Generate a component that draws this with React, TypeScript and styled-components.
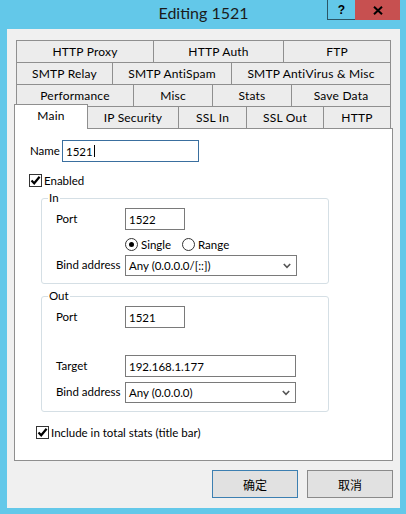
import React from "react";
import styled, { createGlobalStyle } from "styled-components";

const GlobalStyle = createGlobalStyle`
  html, body { margin: 0; padding: 0; }
  body {
    background: #63c8e9;
    font-family: Lato, "Noto Sans", "Noto Sans CJK SC", sans-serif;
    font-size: 11.5px;
    color: #000;
  }
  * { box-sizing: border-box; }
`;

const Window = styled.div`
  width: 406px;
  height: 514px;
  background: #63c8e9;
  display: flex;
  flex-direction: column;
  padding: 0 6px 6px 7px;
`;

const TitleBar = styled.div`
  height: 29px;
  flex: none;
  display: grid;
  grid-template-columns: 1fr auto 1fr;
  align-items: start;
`;

const Title = styled.div`
  grid-column: 2;
  font-size: 16px;
  line-height: 25px;
  color: #1b1b1b;
`;

const Controls = styled.div`
  grid-column: 3;
  justify-self: end;
  display: flex;
  height: 20px;
`;

const HelpButton = styled.div`
  width: 28px;
  height: 20px;
  border-left: 1px solid #2b5666;
  border-bottom: 1px solid #2b5666;
  display: flex;
  align-items: center;
  justify-content: center;
  font-family: "Liberation Sans", sans-serif;
  font-weight: bold;
  font-size: 12px;
`;

const CloseButton = styled.div`
  width: 45px;
  height: 20px;
  background: #c75050;
  display: flex;
  align-items: center;
  justify-content: center;
`;

const Client = styled.div`
  flex: 1;
  background: #f0f0f0;
  padding: 11px 7px 10px 7px;
  display: flex;
  flex-direction: column;
`;

const TabStrip = styled.div`
  margin: 0 2px;
  display: flex;
  flex-direction: column;
  font-size: 12px;
`;

const TabRow = styled.div`
  display: flex;
  align-items: flex-end;
  height: 23px;
  & + & { margin-top: -1px; }
`;

const Tab = styled.div<{ $w?: number; $active?: boolean }>`
  ${(p) => (p.$w ? `width: ${p.$w}px; flex: none;` : "flex: 1;")}
  height: ${(p) => (p.$active ? 25 : 23)}px;
  border: 1px solid #8f8f8f;
  ${(p) => (p.$active ? "border-bottom: none;" : "")}
  background: ${(p) => (p.$active ? "#ffffff" : "#ececec")};
  display: flex;
  align-items: center;
  justify-content: center;
  padding-bottom: ${(p) => (p.$active ? 3 : 0)}px;
  white-space: nowrap;
  letter-spacing: 0.2px;
  margin-left: ${(p) => (p.$active ? -2 : -1)}px;
  &:first-child { margin-left: ${(p) => (p.$active ? -2 : 0)}px; }
  position: relative;
  z-index: ${(p) => (p.$active ? 2 : 0)};
`;

const Panel = styled.div`
  margin-top: -1px;
  height: 333px;
  border: 1px solid #8f8f8f;
  background: #fff;
  display: flex;
  flex-direction: column;
  align-items: flex-start;
  position: relative;
  z-index: 1;
`;

const FieldRow = styled.div<{ $top: number; $left: number; $h?: number }>`
  display: flex;
  align-items: center;
  margin-top: ${(p) => p.$top}px;
  margin-left: ${(p) => p.$left}px;
  height: ${(p) => p.$h ?? 22}px;
  white-space: nowrap;
`;

const Label = styled.div<{ $w: number }>`
  width: ${(p) => p.$w}px;
  flex: none;
  margin-top: -2px;
`;

const TextBox = styled.div<{ $w: number; $focus?: boolean }>`
  width: ${(p) => p.$w}px;
  height: 22px;
  border: 1px solid ${(p) => (p.$focus ? "#3a6f9f" : "#7a7a7a")};
  background: #fff;
  padding-left: 3px;
  display: flex;
  align-items: center;
`;

const Caret = styled.span`
  display: inline-block;
  width: 1px;
  height: 12px;
  background: #000;
  margin-left: 1px;
`;

const Combo = styled.div<{ $w: number }>`
  width: ${(p) => p.$w}px;
  height: 21px;
  border: 1px solid #7a7a7a;
  background: #fff;
  padding: 0 5px 0 3px;
  display: flex;
  align-items: center;
  justify-content: space-between;
`;

const CheckBox = styled.div`
  width: 13px;
  height: 13px;
  border: 1px solid #333;
  background: #fff;
  display: flex;
  align-items: center;
  justify-content: center;
  flex: none;
`;

const CheckLabel = styled.span`
  margin-left: 2px;
`;

const Group = styled.div<{ $top: number; $h: number }>`
  position: relative;
  margin-top: ${(p) => p.$top}px;
  margin-left: 26px;
  width: 288px;
  height: ${(p) => p.$h}px;
  border: 1px solid #d5dfe5;
  border-radius: 3px;
  display: flex;
  flex-direction: column;
  align-items: flex-start;
`;

const Legend = styled.div`
  position: absolute;
  top: -9px;
  left: 6px;
  padding: 0 1px;
  background: #fff;
  line-height: 16px;
`;

const RadioOption = styled.div<{ $w?: number }>`
  display: flex;
  align-items: center;
  ${(p) => (p.$w ? `width: ${p.$w}px;` : "")}
`;

const RadioCircle = styled.div<{ $on?: boolean }>`
  width: 13px;
  height: 13px;
  border-radius: 50%;
  border: 1px solid #333;
  background: #fff;
  display: flex;
  align-items: center;
  justify-content: center;
  margin-right: 3px;
  &::after {
    content: "";
    width: 5px;
    height: 5px;
    border-radius: 50%;
    background: ${(p) => (p.$on ? "#000" : "transparent")};
  }
`;

const ButtonRow = styled.div`
  margin-top: 9px;
  display: flex;
  justify-content: flex-end;
  gap: 9px;
`;

const Button = styled.div<{ $default?: boolean }>`
  width: 86px;
  height: 28px;
  background: #e1e1e1;
  border: 1px solid ${(p) => (p.$default ? "#3c7fb1" : "#8a8a8a")};
  display: flex;
  align-items: center;
  justify-content: center;
  font-family: "Noto Sans CJK SC", sans-serif;
  font-size: 12px;
`;

const Check = () => (
  <svg width="11" height="11" viewBox="0 0 11 11">
    <path d="M1.5 5.5 L4.2 8.3 L9.6 1.8" fill="none" stroke="#000" strokeWidth="2.2" />
  </svg>
);

const Chevron = () => (
  <svg width="8" height="6" viewBox="0 0 8 6">
    <path d="M0.8 1 L4 4.3 L7.2 1" fill="none" stroke="#555" strokeWidth="1.6" />
  </svg>
);

const CloseGlyph = () => (
  <svg width="10" height="9" viewBox="0 0 10 9">
    <path d="M1 0.8 L9 8.2 M9 0.8 L1 8.2" stroke="#000" strokeWidth="2" />
  </svg>
);

export default function App() {
  return (
    <>
      <GlobalStyle />
      <Window>
        <TitleBar>
          <Title>Editing 1521</Title>
          <Controls>
            <HelpButton>?</HelpButton>
            <CloseButton>
              <CloseGlyph />
            </CloseButton>
          </Controls>
        </TitleBar>
        <Client>
          <TabStrip>
            <TabRow>
              <Tab $w={138}>HTTP Proxy</Tab>
              <Tab $w={131}>HTTP Auth</Tab>
              <Tab>FTP</Tab>
            </TabRow>
            <TabRow>
              <Tab $w={97}>SMTP Relay</Tab>
              <Tab $w={120}>SMTP AntiSpam</Tab>
              <Tab>SMTP AntiVirus &amp; Misc</Tab>
            </TabRow>
            <TabRow>
              <Tab $w={118}>Performance</Tab>
              <Tab $w={80}>Misc</Tab>
              <Tab $w={80}>Stats</Tab>
              <Tab>Save Data</Tab>
            </TabRow>
            <TabRow>
              <Tab $w={74} $active>Main</Tab>
              <Tab $w={92}>IP Security</Tab>
              <Tab $w={69}>SSL In</Tab>
              <Tab $w={78}>SSL Out</Tab>
              <Tab>HTTP</Tab>
            </TabRow>
          </TabStrip>
          <Panel>
            <FieldRow $top={11} $left={15}>
              <Label $w={32}>Name</Label>
              <TextBox $w={137} $focus>
                1521
                <Caret />
              </TextBox>
            </FieldRow>
            <FieldRow $top={12} $left={14} $h={13}>
              <CheckBox>
                <Check />
              </CheckBox>
              <CheckLabel>Enabled</CheckLabel>
            </FieldRow>
            <Group $top={11} $h={86}>
              <Legend>In</Legend>
              <FieldRow $top={9} $left={14}>
                <Label $w={69}>Port</Label>
                <TextBox $w={60}>1522</TextBox>
              </FieldRow>
              <FieldRow $top={7} $left={83} $h={14}>
                <RadioOption $w={57}>
                  <RadioCircle $on />
                  Single
                </RadioOption>
                <RadioOption>
                  <RadioCircle />
                  Range
                </RadioOption>
              </FieldRow>
              <FieldRow $top={4} $left={14} $h={21}>
                <Label $w={69}>Bind address</Label>
                <Combo $w={172}>
                  <span>Any (0.0.0.0/[::])</span>
                  <Chevron />
                </Combo>
              </FieldRow>
            </Group>
            <Group $top={12} $h={116}>
              <Legend>Out</Legend>
              <FieldRow $top={9} $left={14}>
                <Label $w={69}>Port</Label>
                <TextBox $w={60}>1521</TextBox>
              </FieldRow>
              <FieldRow $top={27} $left={14}>
                <Label $w={69}>Target</Label>
                <TextBox $w={171}>192.168.1.177</TextBox>
              </FieldRow>
              <FieldRow $top={5} $left={14} $h={21}>
                <Label $w={69}>Bind address</Label>
                <Combo $w={171}>
                  <span>Any (0.0.0.0)</span>
                  <Chevron />
                </Combo>
              </FieldRow>
            </Group>
            <FieldRow $top={14} $left={21} $h={13}>
              <CheckBox>
                <Check />
              </CheckBox>
              <CheckLabel>Include in total stats (title bar)</CheckLabel>
            </FieldRow>
          </Panel>
          <ButtonRow>
            <Button $default>确定</Button>
            <Button>取消</Button>
          </ButtonRow>
        </Client>
      </Window>
    </>
  );
}
